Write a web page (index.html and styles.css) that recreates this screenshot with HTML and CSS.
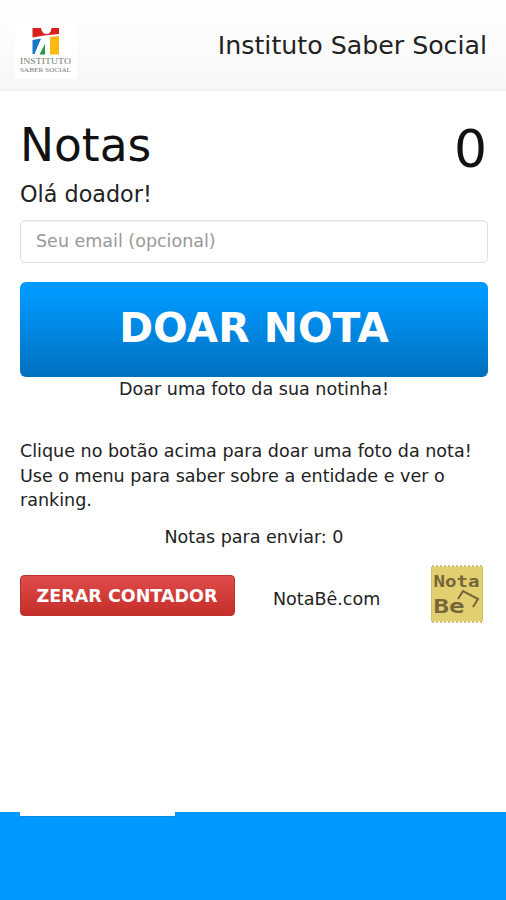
FILE: index.html
```html
<!DOCTYPE html>
<html lang="pt-BR">
<head>
    <meta charset="UTF-8">
    <meta name="viewport" content="width=device-width, initial-scale=1.0">
    <title>Instituto Saber Social</title>
    <link rel="stylesheet" href="styles.css">
</head>
<body>
    <header class="navbar">
        <svg class="logo" width="62" height="62" viewBox="0 0 62 62">
            <rect width="62" height="62" fill="#fff"/>
            <path d="M17.500 11H26q1 6 5.500 6t5-6H44v6l-15 1.500-11.500 2z" fill="#d8201f"/>
            <path d="M17.500 23l8.500-1.500L19.500 37h-2z" fill="#1676c4"/>
            <path d="M30 27v10.500h-5.500z" fill="#25984a"/>
            <path d="M35 20l9-1v18.500h-9z" fill="#fdb913"/>
            <text x="5" y="47.300" font-size="7.200" textLength="51" lengthAdjust="spacingAndGlyphs">INSTITUTO</text>
            <text x="5" y="54.600" font-size="6.500" textLength="51" lengthAdjust="spacingAndGlyphs">SABER SOCIAL</text>
        </svg>
        <div class="brand">Instituto Saber Social</div>
    </header>
    <main class="container">
        <div class="title-row">
            <h1 class="title">Notas</h1>
            <div class="counter">0</div>
        </div>
        <div class="greeting">Olá doador!</div>
        <input type="email" class="input-email" placeholder="Seu email (opcional)">
        <button type="button" class="btn btn-primary">DOAR NOTA</button>
        <div class="caption">Doar uma foto da sua notinha!</div>
        <p class="help">Clique no botão acima para doar uma foto da nota!<br>Use o menu para saber sobre a entidade e ver o<br>ranking.</p>
        <p class="pending">Notas para enviar: 0</p>
        <div class="actions">
            <button type="button" class="btn btn-danger">ZERAR CONTADOR</button>
            <span class="site">NotaBê.com</span>
            <svg class="notabe" width="52" height="58" viewBox="0 0 52 58">
                <rect x=".5" y="1.5" width="51" height="55" fill="#e2cf70"/>
                <path d="M1 1h50M1 57h50" stroke="#d3c27a" stroke-width="2" stroke-dasharray="2 2"/>
                <path d="M.5 2v54M51.5 2v54" stroke="#d0bd65"/>
                <text x="2.5" y="22" font-size="15.5" textLength="46" lengthAdjust="spacingAndGlyphs">Nota</text>
                <text x="2.5" y="47.5" font-size="19.5" textLength="31" lengthAdjust="spacingAndGlyphs">Be</text>
                <path d="M27 34l5-8 15 8-5 8" fill="none" stroke="#76653a" stroke-width="2"/>
            </svg>
        </div>
    </main>
    <footer class="footer">
        <div class="footer-tab"></div>
    </footer>
</body>
</html>
```

FILE: styles.css
```css
* {
    box-sizing: border-box;
}
html, body {
    height: 100%;
    margin: 0;
    padding: 0;
}
body {
    display: flex;
    flex-direction: column;
    background: #fff;
    color: #222;
    font-family: "DejaVu Sans", Verdana, sans-serif;
    font-size: 17.55px;
    overflow: hidden;
}
.navbar {
    display: flex;
    justify-content: space-between;
    align-items: flex-start;
    height: 91px;
    padding: 17px 19px 0 15px;
    background: linear-gradient(#fff, #f7f7f7);
    border-bottom: 2px solid #f0f0f0;
}
.logo text {
    font-family: "Liberation Serif", serif;
    fill: #777;
}
.brand {
    font-size: 25.25px;
    line-height: 30px;
    padding-top: 14px;
}
.container {
    flex: 1;
    padding: 0 18px 0 20px;
}
.title-row {
    display: flex;
    justify-content: space-between;
    height: 88px;
    padding: 24px 1px 0 0;
    color: #111;
}
.title {
    margin: 0;
    font-size: 45.5px;
    font-weight: normal;
    line-height: 62px;
}
.counter {
    font-size: 52px;
    line-height: 68px;
}
.greeting {
    font-size: 22.3px;
    line-height: 30px;
}
.input-email {
    display: block;
    width: 100%;
    height: 43px;
    margin-top: 11px;
    padding: 0 15px 2px;
    border: 1px solid #e0e0e0;
    border-radius: 5px;
    box-shadow: inset 0 1px 1px rgba(0,0,0,0.04);
    font-family: inherit;
    font-size: 17.5px;
}
.input-email::placeholder {
    color: #999;
}
.btn {
    border: none;
    padding: 0;
    color: #fff;
    font-family: inherit;
    font-weight: bold;
}
.btn-primary {
    display: block;
    width: 100%;
    height: 95px;
    margin-top: 19px;
    padding-bottom: 3px;
    border-radius: 6px;
    background: linear-gradient(#09f 12%, #0070bd);
    font-size: 40.8px;
}
.caption {
    line-height: 25px;
    text-align: center;
}
.help {
    margin: 37px 0 0;
    line-height: 24.5px;
}
.pending {
    margin: 12px 0 0;
    line-height: 25px;
    text-align: center;
}
.actions {
    display: flex;
    align-items: center;
    margin-top: 15px;
}
.btn-danger {
    width: 215px;
    height: 41px;
    margin-top: 3px;
    padding: 1px 1px 0 0;
    border: 1px solid #bd302d;
    border-radius: 4px;
    background: linear-gradient(#df4c49, #c42d2a);
    font-size: 17.55px;
}
.site {
    margin: 11px 0 0 38px;
}
.notabe {
    margin-left: auto;
    margin-right: 5px;
}
.notabe text {
    font-family: "DejaVu Sans Mono", monospace;
    font-weight: bold;
    fill: #76653a;
}
.footer {
    height: 88px;
    padding: 0 20px;
    background: #09f;
}
.footer-tab {
    width: 155px;
    height: 88px;
    border-top: 4px solid #fff;
    box-shadow: inset 0 1px 1px #078ae0;
}
```
